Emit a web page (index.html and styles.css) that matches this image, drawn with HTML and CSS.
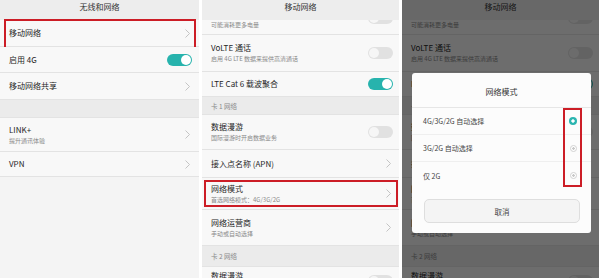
FILE: index.html
```html
<!DOCTYPE html>
<html lang="zh-CN">
<head>
<meta charset="utf-8">
<link rel="stylesheet" href="styles.css">
</head>
<body>
<div class="screen">
  <section class="panel p1">
    <header class="hdr">无线和网络</header>
    <div class="row h27 mark1"><div class="txt"><span class="t">移动网络</span></div><svg class="chev" viewBox="0 0 5 9"><polyline points="0.5,0.5 4.5,4.5 0.5,8.5"/></svg></div>
    <div class="row h26"><div class="txt"><span class="t">启用 4G</span></div><span class="tg on"></span></div>
    <div class="row h27"><div class="txt"><span class="t">移动网络共享</span></div><svg class="chev" viewBox="0 0 5 9"><polyline points="0.5,0.5 4.5,4.5 0.5,8.5"/></svg></div>
    <div class="band h18"></div>
    <div class="row h34"><div class="txt"><span class="t">LINK+</span><span class="sub">提升通讯体验</span></div><svg class="chev" viewBox="0 0 5 9"><polyline points="0.5,0.5 4.5,4.5 0.5,8.5"/></svg></div>
    <div class="row h25"><div class="txt"><span class="t">VPN</span></div><svg class="chev" viewBox="0 0 5 9"><polyline points="0.5,0.5 4.5,4.5 0.5,8.5"/></svg></div>
  </section>

  <section class="panel p2">
    <header class="hdr">移动网络</header>
    <div class="row partial"><div class="txt"><span class="sub">可能消耗更多电量</span></div><span class="tg"></span></div>
    <div class="row h37"><div class="txt"><span class="t">VoLTE 通话</span><span class="sub">启用 4G LTE 数据来提供高清通话</span></div><span class="tg"></span></div>
    <div class="row h25"><div class="txt"><span class="t">LTE Cat 6 载波聚合</span></div><span class="tg on"></span></div>
    <div class="band h18"><span class="bt">卡 1 网络</span></div>
    <div class="row h35"><div class="txt"><span class="t">数据漫游</span><span class="sub">国际漫游时开启数据业务</span></div><span class="tg"></span></div>
    <div class="row h28"><div class="txt"><span class="t">接入点名称 (APN)</span></div><svg class="chev" viewBox="0 0 5 9"><polyline points="0.5,0.5 4.5,4.5 0.5,8.5"/></svg></div>
    <div class="row h32 mark2"><div class="txt"><span class="t">网络模式</span><span class="sub">首选网络模式：4G/3G/2G</span></div><svg class="chev" viewBox="0 0 5 9"><polyline points="0.5,0.5 4.5,4.5 0.5,8.5"/></svg></div>
    <div class="row h36"><div class="txt"><span class="t">网络运营商</span><span class="sub">手动或自动选择</span></div><svg class="chev" viewBox="0 0 5 9"><polyline points="0.5,0.5 4.5,4.5 0.5,8.5"/></svg></div>
    <div class="band h21"><span class="bt">卡 2 网络</span></div>
    <div class="row h28"><div class="txt"><span class="t">数据漫游</span><span class="sub">国际漫游时开启数据业务</span></div><span class="tg"></span></div>
  </section>

  <section class="panel p3">
    <header class="hdr">移动网络</header>
    <div class="row partial"><div class="txt"><span class="sub">可能消耗更多电量</span></div><span class="tg"></span></div>
    <div class="row h37"><div class="txt"><span class="t">VoLTE 通话</span><span class="sub">启用 4G LTE 数据来提供高清通话</span></div><span class="tg"></span></div>
    <div class="row h25"><div class="txt"><span class="t">LTE Cat 6 载波聚合</span></div><span class="tg on"></span></div>
    <div class="band h18"><span class="bt">卡 1 网络</span></div>
    <div class="row h35"><div class="txt"><span class="t">数据漫游</span><span class="sub">国际漫游时开启数据业务</span></div><span class="tg"></span></div>
    <div class="row h28"><div class="txt"><span class="t">接入点名称 (APN)</span></div><svg class="chev" viewBox="0 0 5 9"><polyline points="0.5,0.5 4.5,4.5 0.5,8.5"/></svg></div>
    <div class="row h32"><div class="txt"><span class="t">网络模式</span><span class="sub">首选网络模式：4G/3G/2G</span></div><svg class="chev" viewBox="0 0 5 9"><polyline points="0.5,0.5 4.5,4.5 0.5,8.5"/></svg></div>
    <div class="row h36"><div class="txt"><span class="t">网络运营商</span><span class="sub">手动或自动选择</span></div><svg class="chev" viewBox="0 0 5 9"><polyline points="0.5,0.5 4.5,4.5 0.5,8.5"/></svg></div>
    <div class="band h21"><span class="bt">卡 2 网络</span></div>
    <div class="row h28"><div class="txt"><span class="t">数据漫游</span><span class="sub">国际漫游时开启数据业务</span></div><span class="tg"></span></div>

    <div class="dim"></div>
    <div class="dialog">
      <div class="dtitle">网络模式</div>
      <div class="opts">
        <div class="opt"><span class="ot">4G/3G/2G 自动选择</span><span class="radio sel"></span></div>
        <div class="opt"><span class="ot">3G/2G 自动选择</span><span class="radio"></span></div>
        <div class="opt"><span class="ot">仅 2G</span><span class="radio"></span></div>
      </div>
      <div class="btn">取消</div>
      <div class="mark3"></div>
    </div>
  </section>
</div>
</body>
</html>
```

FILE: styles.css
```css
* { box-sizing: border-box; }
html, body { margin: 0; padding: 0; background: #ffffff; }
body { font-family: "Noto Sans CJK SC", "Noto Sans", sans-serif; }

.screen {
  display: flex;
  gap: 3px;
  width: 599px;
  height: 278px;
  overflow: hidden;
}

.panel {
  position: relative;
  height: 278px;
  overflow: hidden;
  background: #f4f4f4;
  display: flex;
  flex-direction: column;
  flex: none;
}
.p1 { width: 199px; }
.p2, .p3 { width: 197px; }

.hdr {
  flex: none;
  height: 20px;
  padding-top: 2px;
  line-height: 10px;
  text-align: center;
  font-size: 8px;
  color: #333;
  background: #ededed;
}

.row {
  flex: none;
  position: relative;
  display: flex;
  align-items: center;
  padding: 0 7px 0 9px;
  background: #f8f8f8;
  border-bottom: 1px solid #e3e3e3;
}
.p2 .row, .p3 .row { padding-right: 6px; }

.h25 { height: 25px; }
.h26 { height: 26px; }
.h27 { height: 27px; }
.h28 { height: 28px; }
.h32 { height: 32px; }
.h34 { height: 34px; }
.h35 { height: 35px; }
.h36 { height: 36px; }
.h37 { height: 37px; }
.h18 { height: 18px; }
.h21 { height: 21px; }

.partial {
  height: 15px;
  overflow: hidden;
  align-items: flex-end;
  padding-bottom: 5px;
}
.partial .tg { margin-bottom: 5px; }

.txt {
  flex: 1;
  display: flex;
  flex-direction: column;
  min-width: 0;
}
.t {
  font-size: 8px;
  line-height: 10px;
  color: #262626;
  white-space: nowrap;
}
.sub {
  font-size: 6px;
  line-height: 8px;
  margin-top: 2px;
  color: #8a8a8a;
  white-space: nowrap;
}
.partial .sub { margin-top: 0; }

.band {
  flex: none;
  display: flex;
  align-items: center;
  padding-left: 9px;
  background: #ebebeb;
  border-bottom: 1px solid #e3e3e3;
}
.bt { font-size: 6.5px; color: #8a8a8a; }

.chev {
  flex: none;
  width: 5px;
  height: 9px;
  margin-right: 2px;
  fill: none;
  stroke: #bdbdbd;
  stroke-width: 0.9;
}

.tg {
  flex: none;
  position: relative;
  width: 25px;
  height: 12px;
  border-radius: 6px;
  background: #e1e1e1;
}
.tg::after {
  content: "";
  position: absolute;
  top: 1px;
  left: 1px;
  width: 10px;
  height: 10px;
  border-radius: 50%;
  background: #f6f6f6;
}
.tg.on { background: #27b3ad; }
.tg.on::after { left: auto; right: 1px; background: #ffffff; }

/* red highlight annotations */
.mark1::after {
  content: "";
  position: absolute;
  top: -1px;
  left: 4px;
  right: 3px;
  height: 27px;
  border: 2px solid #cc1d26;
}
.mark2::after {
  content: "";
  position: absolute;
  top: 2px;
  bottom: 2px;
  left: 2px;
  right: 1px;
  border: 2px solid #cc1d26;
}

/* dialog screen */
.dim {
  position: absolute;
  inset: 0;
  background: rgba(0, 0, 0, 0.56);
}
.dialog {
  position: absolute;
  left: 10px;
  top: 73px;
  width: 179px;
  height: 160px;
  background: #fcfcfc;
  border-radius: 3px;
  display: flex;
  flex-direction: column;
  padding-bottom: 10px;
}
.dtitle {
  flex: none;
  height: 35px;
  padding-top: 3px;
  display: flex;
  align-items: center;
  justify-content: center;
  font-size: 8px;
  color: #333;
  border-bottom: 1px solid #e6e6e6;
}
.opts { flex: none; display: flex; flex-direction: column; }
.opt {
  height: 27px;
  display: flex;
  align-items: center;
  justify-content: space-between;
  padding: 0 14px 0 11px;
  border-bottom: 1px solid #efefef;
}
.opt:last-child { border-bottom: none; }
.ot { font-size: 7px; color: #444; white-space: nowrap; }

.radio {
  width: 7px;
  height: 7px;
  border-radius: 50%;
  border: 1px solid #d2d2d2;
  background: radial-gradient(circle, #c8c8c8 0 1px, #ffffff 1.5px);
}
.radio.sel {
  width: 8px;
  height: 8px;
  border: none;
  background: radial-gradient(circle, #ffffff 0 1.4px, #2bb5b0 1.9px);
}

.btn {
  flex: none;
  margin: auto 11px 0 12px;
  height: 24px;
  display: flex;
  align-items: center;
  justify-content: center;
  font-size: 7.5px;
  color: #444;
  background: #f4f4f4;
  border: 1px solid #dedede;
  border-radius: 5px;
}

.mark3 {
  position: absolute;
  left: 151px;
  top: 35px;
  width: 19px;
  height: 79px;
  border: 2px solid #cc1d26;
}
```
